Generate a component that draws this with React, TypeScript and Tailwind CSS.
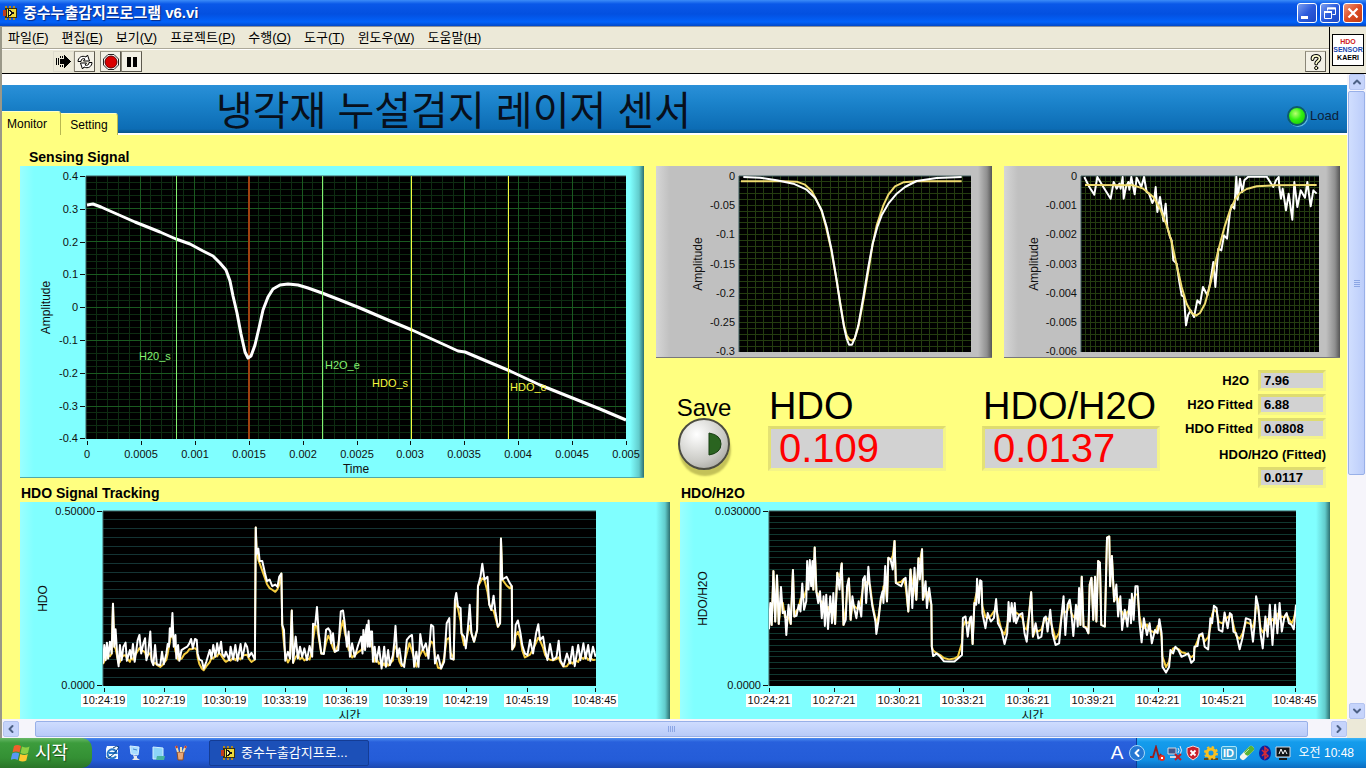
import React from 'react';
import { ChevronDown, ChevronLeft, ChevronRight, ChevronUp } from 'lucide-react';

type Pt = [number, number];

interface Tick {
  at: number;
  label: string;
}

interface PlotArea {
  x: number;
  y: number;
  w: number;
  h: number;
}

interface Trace {
  points: string;
  color: string;
  width: number;
}

interface ChartProps {
  name: string;
  width: number;
  height: number;
  plot: PlotArea;
  tone: 'cyan' | 'gray';
  yTicks: Tick[];
  xTicks?: Tick[];
  timeAxis?: boolean;
  yTitle: string;
  yTitleX: number;
  xTitle?: string;
  xTitleY?: number;
  viewBox: string;
  traces: Trace[];
  grid: React.ReactNode;
  yDash?: boolean;
  children?: React.ReactNode;
}

const parse = (s: string): Pt[] => s.trim().split(/\s+/).map((p) => p.split(',').map(Number) as Pt);

// fitted trace: moving average of the raw trace, slightly offset
const fitted = (s: string, offset: number) => {
  const pts = parse(s);
  return pts
    .map(([x, y], i) => {
      const prev = pts[Math.max(0, i - 1)][1];
      const next = pts[Math.min(pts.length - 1, i + 1)][1];
      const jump = Math.abs(y - prev) > 120 || Math.abs(y - next) > 120;
      return `${x},${jump ? y : y * 0.4 + prev * 0.3 + next * 0.3 + offset}`;
    })
    .join(' ');
};

const sensingTrace =
  '87,205 93,204 101,207 110,211 135,222 160,232 176,239 190,244 203,251 213,256 220,263 226,270 230,281 233,296 237,313 241,334 245,352 248,358 251,356 255,345 259,328 263,310 268,297 273,289 280,285 288,284 298,285 308,288 322,293 340,300 360,308 388,320 412,330 445,345 458,351 465,352 510,371 540,385 575,399 600,409 626,420';

const h2oRaw =
  '280,50 330,52 380,60 430,70 470,88 495,112 515,150 530,200 545,270 560,360 572,440 582,500 590,535 597,553 606,553 614,535 625,495 640,410 655,320 668,250 682,200 695,165 715,130 740,100 765,80 800,62 860,53 935,50';
const h2oFit =
  '273,63 400,63 440,64 465,73 485,92 500,120 515,152 528,200 543,265 558,350 572,435 582,495 590,525 598,537 606,541 614,535 625,500 642,410 657,320 668,252 680,195 700,135 715,103 735,78 760,66 800,63 935,63';

const hdoRaw =
  '253,50 268,80 283,103 292,50 310,80 332,115 341,65 350,85 358,70 362,85 368,50 371,115 378,80 385,65 388,88 394,50 404,102 410,52 424,80 432,50 440,95 447,100 457,128 463,115 467,80 472,155 480,110 486,150 490,182 497,130 502,200 510,230 515,240 520,300 530,310 538,365 545,405 552,410 558,495 564,465 572,450 582,470 592,420 600,430 609,380 622,405 630,370 640,305 646,380 655,265 664,270 672,225 681,235 690,155 695,135 703,145 709,49 713,118 720,55 727,95 733,60 745,49 800,49 820,80 828,60 836,50 838,80 843,115 848,85 852,110 858,150 866,100 877,178 883,65 892,140 902,90 915,112 922,65 932,138 940,90 950,100';
const hdoFit =
  '255,74 400,75 430,85 460,110 480,145 500,195 515,245 530,315 545,380 560,430 575,458 588,466 600,458 615,430 630,375 645,310 660,250 675,195 690,150 705,118 720,98 740,86 770,78 820,75 950,74';

const hdoTracking =
  '238,520 241,465 244,510 247,458 250,505 254,455 258,490 261,342 264,470 267,418 271,500 274,528 277,465 281,510 285,470 290,458 293,512 300,480 303,505 307,462 311,515 318,450 322,435 326,490 331,460 335,445 338,510 342,490 347,425 350,512 354,525 358,465 362,522 370,525 374,485 378,522 384,490 387,462 390,470 392,415 395,440 398,370 401,470 405,435 407,505 411,465 414,512 419,480 425,475 432,470 437,460 441,447 445,475 450,447 454,450 456,490 460,508 466,512 470,535 476,515 484,480 488,505 492,465 497,500 501,460 505,490 510,455 513,492 518,500 521,485 529,510 532,470 538,508 543,465 548,512 555,462 559,505 566,460 570,470 574,500 580,488 588,508 590,115 592,195 596,178 599,215 605,215 611,250 616,275 622,270 628,290 635,285 640,292 644,262 649,252 651,405 655,420 658,512 664,485 669,505 673,362 676,518 682,440 687,505 692,470 697,500 702,475 708,510 714,468 720,500 722,402 727,405 731,352 735,430 741,490 747,492 752,420 757,415 762,425 764,460 768,430 772,485 780,480 786,365 791,362 795,400 800,470 804,425 807,500 812,460 818,500 826,465 833,440 836,490 838,420 842,480 844,420 846,405 848,470 850,392 853,470 855,425 858,425 860,515 864,470 868,515 874,470 880,535 886,470 890,530 895,480 899,525 906,495 909,460 912,408 916,500 921,475 926,520 932,530 938,450 944,440 950,435 955,530 960,485 965,530 969,432 975,480 982,460 988,505 994,405 999,410 1003,520 1010,495 1017,535 1024,515 1030,400 1036,385 1039,505 1046,508 1049,330 1052,310 1056,350 1062,355 1064,430 1070,440 1074,475 1079,410 1083,345 1087,430 1093,455 1100,420 1102,290 1108,260 1112,223 1117,270 1124,262 1128,345 1133,360 1138,318 1142,365 1148,410 1153,400 1155,148 1158,270 1168,262 1175,280 1180,290 1181,478 1186,465 1189,405 1194,392 1200,430 1204,465 1210,490 1216,495 1222,450 1229,490 1236,430 1241,403 1245,450 1252,440 1257,480 1262,510 1268,462 1275,510 1283,500 1288,452 1292,510 1299,528 1307,490 1314,520 1320,470 1325,528 1333,465 1338,510 1345,460 1350,505 1356,465 1361,512 1367,470 1373,500';

const ratioTracking =
  '222,418 225,340 228,405 232,245 236,395 240,258 244,402 249,292 253,370 258,365 261,435 266,345 271,402 276,242 279,380 284,378 289,345 293,365 297,282 301,360 306,335 308,215 311,300 314,212 317,290 320,215 322,300 325,175 329,308 333,340 337,305 341,385 345,320 348,408 351,315 355,417 360,320 364,400 367,310 371,402 376,250 381,300 384,240 386,222 390,405 395,390 398,290 402,267 406,390 410,320 414,355 419,385 424,335 430,380 434,270 438,260 441,340 446,232 450,300 455,350 462,395 464,432 469,390 474,325 478,305 480,340 484,230 488,335 491,205 496,210 501,240 505,155 508,280 514,285 520,290 526,270 530,265 536,365 541,240 545,355 550,235 554,330 559,207 562,270 567,180 569,330 575,275 578,355 583,295 588,345 589,470 592,498 600,490 608,500 616,513 628,514 640,514 648,505 657,495 659,385 665,380 670,440 675,385 678,380 681,462 685,340 689,345 691,268 695,340 698,272 701,275 703,370 710,415 715,370 722,395 729,385 734,328 738,400 746,420 753,462 759,430 762,337 765,395 769,340 774,395 776,340 779,400 786,375 793,370 798,430 803,455 808,380 813,308 817,440 823,400 829,445 836,440 842,385 846,380 850,425 856,360 861,430 868,465 876,460 882,370 886,320 890,435 895,345 900,330 903,360 908,438 914,345 918,410 921,295 924,405 927,262 931,410 937,415 942,430 945,285 949,265 953,390 957,262 960,395 964,215 968,220 971,405 979,410 984,145 989,142 991,290 995,200 1000,335 1005,285 1009,380 1014,320 1018,420 1024,360 1030,410 1035,330 1038,400 1040,312 1044,390 1048,290 1053,290 1057,395 1062,457 1067,385 1074,435 1080,400 1085,460 1092,420 1098,430 1102,388 1107,430 1109,530 1117,547 1124,530 1127,480 1133,490 1138,470 1145,480 1152,500 1160,495 1167,490 1174,518 1180,510 1181,470 1188,468 1192,435 1199,430 1204,470 1212,478 1217,385 1221,400 1225,348 1231,355 1236,420 1244,425 1249,368 1256,415 1261,370 1265,375 1269,425 1275,430 1283,478 1290,440 1297,385 1307,390 1313,455 1317,400 1320,320 1325,350 1330,430 1335,475 1341,380 1346,440 1351,345 1357,465 1363,345 1368,430 1373,340 1378,425 1384,380 1389,370 1394,400 1400,405 1405,418 1410,345';

const ticks = (labels: string[], start: number, step: number): Tick[] =>
  labels.map((label, i) => ({ label, at: Math.round(start + i * step) }));

const GridLines: React.FC<{ plot: PlotArea; nx: number; ny: number; color: string }> = ({ plot, nx, ny, color }) => (
  <g stroke={color} shapeRendering="crispEdges">
    {Array.from({ length: Math.max(0, nx - 1) }, (_, i) => {
      const x = plot.x + ((i + 1) * plot.w) / nx;
      return <line key={`x${i}`} x1={x} x2={x} y1={plot.y} y2={plot.y + plot.h} />;
    })}
    {Array.from({ length: Math.max(0, ny - 1) }, (_, i) => {
      const y = plot.y + ((i + 1) * plot.h) / ny;
      return <line key={`y${i}`} y1={y} y2={y} x1={plot.x} x2={plot.x + plot.w} />;
    })}
  </g>
);

const Chart: React.FC<ChartProps> = ({
  name,
  width,
  height,
  plot,
  tone,
  yTicks,
  xTicks = [],
  timeAxis,
  yTitle,
  yTitleX,
  xTitle,
  xTitleY = 0,
  viewBox,
  traces,
  grid,
  yDash = true,
  children,
}) => {
  const bottom = plot.y + plot.h;
  const midY = plot.y + plot.h / 2;
  return (
    <div
      className={
        tone === 'cyan'
          ? 'border-b border-[#4fa8a8] bg-[linear-gradient(to_right,#9affff_0,#80ffff_14px,#80ffff_calc(100%-14px),#62cccc_calc(100%-5px),#2d7070_100%)]'
          : 'border-b border-[#77777a] bg-[linear-gradient(to_right,#d6d6d6_0,#c0c0c0_14px,#c0c0c0_calc(100%-14px),#8f8f8f_calc(100%-5px),#555_100%)]'
      }
    >
      <svg role="img" aria-label={name} viewBox={`0 0 ${width} ${height}`} className="block w-full">
        <rect x={plot.x} y={plot.y} width={plot.w} height={plot.h} fill="#000" />
        {grid}
        <path d={`M${plot.x} ${bottom}V${plot.y}H${plot.x + plot.w}`} fill="none" stroke="#3d5c5c" />
        <svg x={plot.x} y={plot.y} width={plot.w} height={plot.h} viewBox={viewBox} preserveAspectRatio="none">
          {traces.map((t, i) => (
            <polyline
              key={i}
              points={t.points}
              fill="none"
              stroke={t.color}
              strokeWidth={t.width}
              strokeLinejoin="round"
              vectorEffect="non-scaling-stroke"
            />
          ))}
        </svg>
        <g fontSize="11" fill="#101010">
          {yTicks.map((t) => (
            <g key={t.label}>
              {yDash && <path d={`M${plot.x - 6} ${t.at + 0.5}h5`} stroke="#101010" />}
              <text x={plot.x - (yDash ? 8 : 4)} y={t.at + 4} textAnchor="end">
                {t.label}
              </text>
            </g>
          ))}
          {xTicks.map((t) => (
            <g key={t.label}>
              <path d={`M${t.at + 0.5} ${bottom + 2}v4`} stroke="#101010" />
              {timeAxis && <rect x={t.at - 23} y={bottom + 8} width="46" height="13" fill="#fff" />}
              <text x={t.at} y={bottom + (timeAxis ? 18 : 19)} textAnchor="middle">
                {t.label}
              </text>
            </g>
          ))}
        </g>
        <g fontSize="12" fill="#101010" textAnchor="middle">
          <text transform={`translate(${yTitleX} ${midY}) rotate(-90)`}>{yTitle}</text>
          {xTitle && (
            <text x={plot.x + plot.w / 2} y={xTitleY}>
              {xTitle}
            </text>
          )}
        </g>
        {children}
      </svg>
    </div>
  );
};

const LabviewIcon = () => (
  <svg viewBox="0 0 16 16" className="size-4 shrink-0" shapeRendering="crispEdges" aria-hidden="true">
    <path d="M2 1h2v2h2V1h2v2h2V1h2v2h2v10h-2v2h-2v-2H8v2H6v-2H4v2H2z" fill="#b08820" />
    <rect x="2" y="3" width="12" height="10" fill="#3a3010" />
    <rect x="4" y="4" width="9" height="8" fill="#ecd83c" />
    <rect x="0" y="5" width="3" height="6" fill="#c23c1c" />
    <path d="M5 4v8l7-4z" fill="#141414" />
    <path d="M6 6v4l3-2z" fill="#fff8a0" />
  </svg>
);

const ToolButton: React.FC<{ label: string; flat?: boolean; children: React.ReactNode }> = ({ label, flat, children }) => (
  <button
    aria-label={label}
    className={
      flat
        ? 'flex size-[21px] items-center justify-center border border-[#dedbcd]'
        : 'flex size-[21px] items-center justify-center border border-t-[#a19d8d] border-r-[#5c594e] border-b-[#5c594e] border-l-[#8a8677] bg-[#f3f1e6]'
    }
  >
    {children}
  </button>
);

const menus: [string, string][] = [
  ['파일', 'F'],
  ['편집', 'E'],
  ['보기', 'V'],
  ['프로젝트', 'P'],
  ['수행', 'O'],
  ['도구', 'T'],
  ['윈도우', 'W'],
  ['도움말', 'H'],
];

const TitleBar = () => (
  <header className="flex h-[26px] shrink-0 items-center bg-[linear-gradient(#3c8cf8_0,#0a58e8_4px,#0350e0_14px,#0262fa_22px,#0148c8_100%)] pr-[3px] pl-[3px]">
    <LabviewIcon />
    <h1 className="flex-1 pl-1 text-[15px] leading-5 font-bold text-white [text-shadow:1px_1px_1px_#0a2a80]">중수누출감지프로그램 v6.vi</h1>
    <div className="flex gap-[3px]">
      <button aria-label="Minimize" className="flex size-5 items-center justify-center rounded-[3px] border border-white bg-[linear-gradient(135deg,#7c9ff0,#2c5bdc_50%,#1e48c4)]">
        <svg viewBox="0 0 18 18" className="size-[18px]"><path d="M3 12h7v3H3z" fill="#fff" /></svg>
      </button>
      <button aria-label="Restore" className="flex size-5 items-center justify-center rounded-[3px] border border-white bg-[linear-gradient(135deg,#7c9ff0,#2c5bdc_50%,#1e48c4)]">
        <svg viewBox="0 0 18 18" className="size-[18px]" fill="none" stroke="#fff">
          <path d="M6.500 6.500V4h8v6.500h-3" />
          <path d="M6 4.500h9" strokeWidth="2" />
          <path d="M3.500 8h7v6.500h-7z" />
          <path d="M3 8h8" strokeWidth="2" />
        </svg>
      </button>
      <button aria-label="Close" className="flex size-5 items-center justify-center rounded-[3px] border border-white bg-[linear-gradient(135deg,#f0987c,#dc4c24_50%,#c03c14)]">
        <svg viewBox="0 0 18 18" className="size-[18px]"><path d="M4.500 4.500l9 9M13.500 4.500l-9 9" stroke="#fff" strokeWidth="2.200" /></svg>
      </button>
    </div>
  </header>
);

const Toolbar = () => (
  <div className="flex h-12 shrink-0 border-t border-b border-t-[#8a8f98] border-b-black bg-[#ece9d8]">
    <div className="flex flex-1 flex-col">
      <nav className="flex h-[22px] items-center gap-[13px] border-b border-[#aca899] pl-[6px] text-[13px] leading-4 text-black">
        {menus.map(([text, key]) => (
          <button key={key}>
            {text}(<span className="underline">{key}</span>)
          </button>
        ))}
      </nav>
      <div className="flex flex-1 items-center border-t border-white pr-[3px] pl-[51px]">
        <ToolButton label="Run" flat>
          <svg viewBox="0 0 17 15" className="h-[15px] w-[17px]" shapeRendering="crispEdges">
            <path d="M1 4h1v7H1zM3 4h1v7H3zM5 5h5v5H5z" fill="#000" />
            <path d="M9 1l7 6.500L9 14z" fill="#000" />
            <path d="M5 2h1v2H5zM7 2h1v2H7zM5 11h1v2H5zM7 11h1v2H7z" fill="#000" />
          </svg>
        </ToolButton>
        <ToolButton label="Run Continuously">
          <svg viewBox="0 0 18 18" className="size-[18px]" fill="#fff" stroke="#000" strokeWidth="1">
            <path d="M2 8.500c0-4 4-6.500 8-4.500l1.500-2 2 6H7.500l1.500-2C7 5 5 6 5 8.500z" />
            <path d="M16 9.500c0 4-4 6.500-8 4.500l-1.500 2-2-6h6L9 12c2 1 4 0 4-2.500z" />
          </svg>
        </ToolButton>
        <span className="w-[5px]" />
        <ToolButton label="Abort Execution">
          <svg viewBox="0 0 18 18" className="size-[18px]">
            <path d="M6 1.500h6l4.500 4.500v6L12 16.500H6L1.500 12V6z" fill="#fff" stroke="#222" />
            <circle cx="9" cy="9" r="6" fill="#d90000" stroke="#5a0000" />
          </svg>
        </ToolButton>
        <ToolButton label="Pause">
          <svg viewBox="0 0 18 18" className="size-[18px]"><path d="M4 4h4v10H4zM10 4h4v10h-4z" fill="#000" /></svg>
        </ToolButton>
        <span className="flex-1" />
        <ToolButton label="Help">
          <svg viewBox="0 0 18 18" className="size-[18px]" fill="none" strokeLinecap="round">
            <path d="M5.500 6C5.500 2 12.500 2 12.500 5.500C12.500 8 9.200 8.500 9.200 10.500" stroke="#000" strokeWidth="3.800" />
            <path d="M5.500 6C5.500 2 12.500 2 12.500 5.500C12.500 8 9.200 8.500 9.200 10.500" stroke="#ffffd0" strokeWidth="1.800" />
            <circle cx="9.200" cy="15" r="1.600" fill="#ffffd0" stroke="#000" />
          </svg>
        </ToolButton>
      </div>
    </div>
    <div className="flex w-[37px] items-center justify-center border-l border-black">
      <div className="flex size-8 shrink-0 flex-col items-center justify-center border border-black bg-white text-[7px] leading-[8px] font-bold">
        <span className="text-[#d02020]">HDO</span>
        <span className="text-[#1848b0]">SENSOR</span>
        <span className="text-black">KAERI</span>
      </div>
    </div>
  </div>
);

const TabHeader = () => (
  <div className="flex h-[50px] items-stretch bg-[linear-gradient(#2a90d8_0,#1c84cc_16px,#0c6cb4_44px,#0a5488_48px,#fff_48px,#fff_50px)]">
    <div role="tablist" className="flex w-[214px] items-end text-xs leading-4 text-black">
      <button role="tab" aria-selected="true" className="h-6 w-[59px] rounded-tr-[3px] border-t border-r border-t-[#ffffc8] border-r-[#b8b850] bg-[#ffff80] pr-2 text-center">
        Monitor
      </button>
      <button role="tab" aria-selected="false" className="h-[22px] w-[57px] rounded-tr-[3px] border-t border-r border-t-[#ffffc8] border-r-[#b8b850] bg-[#ffff80] text-center">
        Setting
      </button>
    </div>
    <h2 className="flex-1 pt-[2px] text-[40px] leading-[48px] text-[#08101c]">냉각재 누설검지 레이저 센서</h2>
    <div className="flex items-center gap-[3px] pt-3 pr-2 text-[13px] text-[#0c2038]">
      <span className="size-5 rounded-full border-2 border-[#0d5c6c] bg-[radial-gradient(circle_at_40%_35%,#b8ff70,#30f010_45%,#18b808)] shadow-[1px_1px_0_#5cb8e0]" />
      Load
    </div>
  </div>
);

const PanelLabel: React.FC<{ children: React.ReactNode; indent?: boolean }> = ({ children, indent }) => (
  <h3 className={indent ? 'h-4 pl-[9px] text-sm leading-[14px] font-bold' : 'h-4 pl-px text-sm leading-[14px] font-bold'}>{children}</h3>
);

const bigValues = [
  { id: 'hdo', label: 'HDO', value: '0.109' },
  { id: 'ratio', label: 'HDO/H2O', value: '0.0137' },
];

const smallValues = [
  { id: 'h2o', label: 'H2O', value: '7.96' },
  { id: 'h2o-fit', label: 'H2O Fitted', value: '6.88' },
  { id: 'hdo-fit', label: 'HDO Fitted', value: '0.0808' },
];

const smallBox =
  'h-[21px] w-[68px] border-[3px] border-t-[#dedc70] border-r-[#f4f488] border-b-[#f4f488] border-l-[#e4e274] bg-[#d2d2d2] pl-[3px] text-[13px] font-bold text-black outline-none';

const Readouts = () => (
  <div className="flex h-32 gap-9 pl-5">
    <div className="flex w-14 flex-col items-center pt-10">
      <label htmlFor="save" className="text-2xl leading-5 text-black">Save</label>
      <button id="save" className="size-[52px] shrink-0 rounded-full border-2 border-[#4c4c40] bg-[radial-gradient(circle_at_35%_30%,#fff,#c9c9c4_60%,#8f8f88)] shadow-[1px_6px_2px_#c4c258]">
        <svg viewBox="0 0 48 48" className="size-12" aria-hidden="true">
          <path d="M29 13q12 2 12 11t-12 11z" fill="#2a6420" stroke="#163c10" />
        </svg>
      </button>
    </div>
    {bigValues.map((v) => (
      <div key={v.id} className="flex w-[178px] flex-col pt-7">
        <label htmlFor={v.id} className="h-10 pl-px text-[38px] leading-10 text-black">{v.label}</label>
        <input
          id={v.id}
          readOnly
          value={v.value}
          className="h-[45px] w-full border-[3px] border-t-[#dedc70] border-r-[#f4f488] border-b-[#f4f488] border-l-[#e4e274] bg-[#d2d2d2] pl-2 text-[40px] leading-[39px] text-[#ff0000] outline-none"
        />
      </div>
    ))}
    <div className="-ml-9 flex flex-1 flex-col items-end gap-[3px] pt-3 pr-[14px] text-[13px] font-bold text-black">
      {smallValues.map((v) => (
        <div key={v.id} className="flex items-center gap-[5px]">
          <label htmlFor={v.id} className={v.id === 'h2o' ? 'pr-1' : ''}>{v.label}</label>
          <input id={v.id} readOnly value={v.value} className={smallBox} />
        </div>
      ))}
      <label htmlFor="ratio-fit" className="pt-1 leading-[18px]">HDO/H2O (Fitted)</label>
      <input id="ratio-fit" readOnly value="0.0117" className={smallBox} />
    </div>
  </div>
);

const p1: PlotArea = { x: 66, y: 10, w: 540, h: 263 };
const p2: PlotArea = { x: 83, y: 10, w: 232, h: 176 };
const p3: PlotArea = { x: 77, y: 10, w: 238, h: 176 };
const p4: PlotArea = { x: 83, y: 9, w: 493, h: 175 };
const p5: PlotArea = { x: 89, y: 9, w: 527, h: 175 };

const cursors = [
  { x: 156, color: '#84f070', label: 'H20_s', tx: 119, ty: 194 },
  { x: 302, color: '#84f070', label: 'H2O_e', tx: 305, ty: 203 },
  { x: 391, color: '#f8f840', label: 'HDO_s', tx: 352, ty: 221 },
  { x: 488, color: '#f8f840', label: 'HDO_e', tx: 490, ty: 225 },
];

const MonitorPage = () => (
  <div className="pt-[15px] pl-[18px] text-black">
    <div className="grid grid-cols-[624fr_684fr] gap-x-3 pr-[7px]">
      <section>
        <PanelLabel indent>Sensing Signal</PanelLabel>
        <Chart
          name="Sensing Signal"
          width={624}
          height={311}
          plot={p1}
          tone="cyan"
          yTicks={ticks(['0.4', '0.3', '0.2', '0.1', '0', '-0.1', '-0.2', '-0.3', '-0.4'], 10, 32.8)}
          xTicks={ticks(['0', '0.0005', '0.001', '0.0015', '0.002', '0.0025', '0.003', '0.0035', '0.004', '0.0045', '0.005'], 67, 53.9)}
          yTitle="Amplitude"
          yTitleX={30}
          xTitle="Time"
          xTitleY={307}
          viewBox="86 176 540 263"
          traces={[{ points: sensingTrace, color: '#fff', width: 3 }]}
          grid={
            <>
              <GridLines plot={p1} nx={50} ny={40} color="#0e2c12" />
              <GridLines plot={p1} nx={10} ny={8} color="#1a5a20" />
              <path d="M229 10v263" stroke="#a04010" strokeWidth="2" />
            </>
          }
        >
          {cursors.map((c) => (
            <g key={c.label}>
              <path d={`M${c.x + 0.5} 10v263`} stroke={c.color} shapeRendering="crispEdges" />
              <text x={c.tx} y={c.ty} fontSize="11" fill={c.color}>
                {c.label}
              </text>
            </g>
          ))}
        </Chart>
      </section>
      <section>
        <div className="grid grid-cols-2 gap-3 pt-4">
          <Chart
            name="H2O absorption"
            width={336}
            height={191}
            plot={p2}
            tone="gray"
            yDash={false}
            yTicks={ticks(['0', '-0.05', '-0.1', '-0.15', '-0.2', '-0.25', '-0.3'], 10, 29.2)}
            yTitle="Amplitude"
            yTitleX={46}
            viewBox="267 47 696 528"
            traces={[
              { points: h2oFit, color: '#f0dc70', width: 2 },
              { points: h2oRaw, color: '#fff', width: 2 },
            ]}
            grid={<GridLines plot={p2} nx={28} ny={30} color="#243c10" />}
          />
          <Chart
            name="HDO absorption"
            width={336}
            height={191}
            plot={p3}
            tone="gray"
            yDash={false}
            yTicks={ticks(['0', '-0.001', '-0.002', '-0.003', '-0.004', '-0.005', '-0.006'], 10, 29.2)}
            yTitle="Amplitude"
            yTitleX={34}
            viewBox="243 47 714 528"
            traces={[
              { points: hdoRaw, color: '#fff', width: 2 },
              { points: hdoFit, color: '#f0dc70', width: 2 },
            ]}
            grid={<GridLines plot={p3} nx={48} ny={30} color="#243c10" />}
          />
        </div>
        <Readouts />
      </section>
    </div>
    <div className="grid grid-cols-2 gap-x-[10px] pr-[17px]">
      <section>
        <PanelLabel>HDO Signal Tracking</PanelLabel>
        <Chart
          name="HDO Signal Tracking"
          width={650}
          height={240}
          plot={p4}
          tone="cyan"
          yTicks={[{ at: 9, label: '0.50000' }, { at: 183, label: '0.0000' }]}
          xTicks={[...ticks(['10:24:19', '10:27:19', '10:30:19', '10:33:19', '10:36:19', '10:39:19', '10:42:19', '10:45:19'], 84, 60.4), { at: 575, label: '10:48:45' }]}
          timeAxis
          yTitle="HDO"
          yTitleX={27}
          xTitle="시간"
          xTitleY={218}
          viewBox="238 66 1136 521"
          traces={[
            { points: fitted(hdoTracking, 18), color: '#f4cc40', width: 2 },
            { points: hdoTracking, color: '#fff', width: 2 },
          ]}
          grid={<GridLines plot={p4} nx={0} ny={20} color="#143434" />}
        />
      </section>
      <section>
        <PanelLabel>HDO/H2O</PanelLabel>
        <Chart
          name="HDO/H2O"
          width={650}
          height={240}
          plot={p5}
          tone="cyan"
          yTicks={[{ at: 9, label: '0.030000' }, { at: 183, label: '0.0000' }]}
          xTicks={[...ticks(['10:24:21', '10:27:21', '10:30:21', '10:33:21', '10:36:21', '10:39:21', '10:42:21', '10:45:21'], 89, 64.8), { at: 615, label: '10:48:45' }]}
          timeAxis
          yTitle="HDO/H2O"
          yTitleX={27}
          xTitle="시간"
          xTitleY={218}
          viewBox="222 66 1188 521"
          traces={[
            { points: fitted(ratioTracking, -6), color: '#f4cc40', width: 2 },
            { points: ratioTracking, color: '#fff', width: 2 },
          ]}
          grid={<GridLines plot={p5} nx={0} ny={30} color="#103830" />}
        />
      </section>
    </div>
  </div>
);

const scrollBtn =
  'flex size-4 shrink-0 items-center justify-center rounded-[2px] border border-[#b4c4f0] bg-[#c6d4fb] text-[#4d6185]';

const VScroll = () => (
  <div className="flex w-[19px] shrink-0 flex-col items-center bg-[#f6f5fb]">
    <button aria-label="Scroll up" className={scrollBtn}><ChevronUp className="size-3" strokeWidth={4} /></button>
    <div className="flex w-full flex-1 flex-col px-px pt-px">
      <div className="flex h-[384px] flex-col items-center justify-center gap-px rounded-[2px] border border-[#98b0e8] bg-[linear-gradient(to_right,#d0defe,#bccdfa)]">
        <i className="h-px w-[6px] bg-[#8ca6e4]" />
        <i className="h-px w-[6px] bg-[#8ca6e4]" />
        <i className="h-px w-[6px] bg-[#8ca6e4]" />
        <i className="h-px w-[6px] bg-[#8ca6e4]" />
      </div>
    </div>
    <button aria-label="Scroll down" className={scrollBtn}><ChevronDown className="size-3" strokeWidth={4} /></button>
  </div>
);

const HScroll = () => (
  <div className="flex h-[19px] shrink-0 items-center bg-[#f6f5fb] pl-px">
    <button aria-label="Scroll left" className={scrollBtn}><ChevronLeft className="size-3" strokeWidth={4} /></button>
    <div className="flex flex-1 pr-[23px] pl-4">
      <div className="flex h-4 flex-1 items-center justify-center gap-px rounded-[2px] border border-[#98b0e8] bg-[linear-gradient(#cedcfe,#b8caf8)]">
        <i className="h-[6px] w-px bg-[#8ca6e4]" />
        <i className="h-[6px] w-px bg-[#8ca6e4]" />
        <i className="h-[6px] w-px bg-[#8ca6e4]" />
        <i className="h-[6px] w-px bg-[#8ca6e4]" />
      </div>
    </div>
    <button aria-label="Scroll right" className={scrollBtn}><ChevronRight className="size-3" strokeWidth={4} /></button>
    <div className="h-full w-[19px] bg-[#ece9d8]" />
  </div>
);

const WindowsLogo = () => (
  <svg viewBox="0 0 20 20" className="size-5" aria-hidden="true">
    <path d="M3 3q3-2 7 0L8.500 9.500q-3.500-2-7 0z" fill="#f0602c" />
    <path d="M11 3.500q4 2 7.500 0L17 10q-3.500 2-7.500 0z" fill="#8cd044" />
    <path d="M1.200 10.500q3.500-2 7 0L6.700 17q-3.500-2-7 0z" fill="#5898f4" />
    <path d="M9.300 11q4 2 7.500 0l-1.500 6.500q-3.500 2-7.500 0z" fill="#fcc830" />
  </svg>
);

const QuickLaunch = () => (
  <div className="flex items-center gap-[7px]">
    <svg viewBox="0 0 16 16" className="size-4">
      <path d="M3 1h11v13H2V4z" fill="#f4faff" />
      <path d="M12 11A4.500 4.500 0 1 1 12.500 8H5" fill="none" stroke="#2878c8" strokeWidth="2" />
      <path d="M2 12Q1 15 6 12T15 2Q13 0 9 3" fill="none" stroke="#0c4484" />
    </svg>
    <svg viewBox="0 0 16 16" className="size-4">
      <path d="M3 1l9 1-1 8-7-1z" fill="#a8dcff" stroke="#d8f0ff" />
      <path d="M6 10l4 1v2l3 2H5l2-2z" fill="#e8e8e8" />
      <path d="M6 4l4 1" stroke="#4884d0" />
    </svg>
    <svg viewBox="0 0 16 16" className="size-4">
      <path d="M3 2l10 1v11H3z" fill="#8cd4f8" stroke="#d0f0ff" />
      <path d="M6 15l1-4h8l-1 4z" fill="#48b4a0" />
    </svg>
    <svg viewBox="0 0 16 16" className="size-4">
      <path d="M4 7h7l-1 8H5z" fill="#e8a878" stroke="#8c4c28" />
      <path d="M5 7L3 1M8 7V2M10 7l3-6" stroke="#f0dca8" strokeWidth="2" />
      <path d="M3 1l1 2M13 1l-1 2" stroke="#c83c24" strokeWidth="2" />
    </svg>
  </div>
);

const TrayIcons = () => (
  <div className="flex items-center gap-[2px]">
    <svg viewBox="0 0 16 16" className="size-4">
      <path d="M1 12h3l3-10 3 11 2-4" fill="none" stroke="#981c1c" strokeWidth="1.800" />
      <circle cx="13" cy="13" r="3" fill="#e82c1c" />
      <path d="M12 12l2 2M14 12l-2 2" stroke="#fff" />
    </svg>
    <svg viewBox="0 0 16 16" className="size-4">
      <path d="M1 3h8v6H1z" fill="#40588c" stroke="#d4d8e0" />
      <path d="M3 12h6" stroke="#d4d8e0" strokeWidth="2" />
      <path d="M11 3q2 2 0 5M13 1q3 4 0 9" fill="none" stroke="#e0e8f8" />
      <path d="M8 9l6 6M14 9l-6 6" stroke="#c01c24" strokeWidth="2" />
    </svg>
    <svg viewBox="0 0 16 16" className="size-4">
      <path d="M8 1l6 2v5q0 4-6 7-6-3-6-7V3z" fill="#c8202c" stroke="#f0d8d8" />
      <path d="M5.500 5.500l5 5M10.500 5.500l-5 5" stroke="#fff" strokeWidth="1.800" />
    </svg>
    <svg viewBox="0 0 16 16" className="size-4">
      <path d="M1 14h14" stroke="#584c28" strokeWidth="2" />
      <circle cx="8" cy="8" r="4" fill="none" stroke="#f8c020" strokeWidth="3" />
      <circle cx="8" cy="8" r="6" fill="none" stroke="#f8c020" strokeWidth="2" strokeDasharray="2.360 2.350" />
    </svg>
    <span className="flex h-[14px] w-4 items-center justify-center rounded-[2px] border border-[#a8e4f8] bg-[#38a4d8] text-[11px] leading-3 font-bold text-white">ID</span>
    <svg viewBox="0 0 16 16" className="size-4">
      <path d="M4 12l8-8" stroke="#f4f4ec" strokeWidth="6" strokeLinecap="round" />
      <path d="M8.500 7.500L12 4" stroke="#58b434" strokeWidth="6" strokeLinecap="round" />
      <path d="M4 10l6-6" stroke="#fff" opacity=".6" />
    </svg>
    <svg viewBox="0 0 16 16" className="size-4">
      <ellipse cx="8" cy="8" rx="6" ry="7.500" fill="#10209c" />
      <path d="M5 5l6 6-3 2.500v-11L11 5l-6 6" fill="none" stroke="#d82c34" strokeWidth="1.500" />
    </svg>
    <svg viewBox="0 0 16 16" className="size-4">
      <path d="M1 2h14v10H1z" fill="#101418" stroke="#d8dce4" />
      <path d="M4 9l2-5 2 5 2-4 2 4" fill="none" stroke="#fff" />
      <path d="M4 14h8" stroke="#181818" strokeWidth="2" />
    </svg>
  </div>
);

const Taskbar = () => (
  <footer className="flex h-[30px] shrink-0 items-stretch bg-[linear-gradient(#4c8cf0_0,#2860dc_4px,#245cd8_22px,#1c48b0_100%)] text-white">
    <button className="flex w-[92px] items-center gap-1 rounded-r-[10px] bg-[linear-gradient(#68b868_0,#3c9c3c_5px,#349034_20px,#2a7428_100%)] pl-[11px] text-lg [text-shadow:1px_1px_1px_#184818]">
      <WindowsLogo />
      시작
    </button>
    <div className="flex w-[117px] items-center pl-3"><QuickLaunch /></div>
    <button className="my-[2px] flex w-[160px] items-center gap-1 rounded-[2px] border border-[#143c94] bg-[#1c50b8] pl-[11px] text-[13px]">
      <LabviewIcon />
      중수누출감지프로...
    </button>
    <div className="flex-1" />
    <span className="pr-3 text-[19px] leading-[30px]">A</span>
    <div className="flex items-center border-l border-[#0c3c98] bg-[linear-gradient(#3cb4f8_0,#149cec_4px,#1090e4_22px,#0c6cc0_100%)] pr-3 text-xs">
      <button aria-label="Show hidden icons" className="-ml-2 mr-1 flex size-4 items-center justify-center rounded-full border border-[#a8d8f8] bg-[#2478d4]">
        <ChevronLeft className="size-3" strokeWidth={4} />
      </button>
      <TrayIcons />
      <span className="pl-2">오전 10:48</span>
    </div>
  </footer>
);

const App: React.FC = () => (
  <div className="flex h-screen flex-col overflow-hidden bg-[#ece9d8] font-['Liberation_Sans','Noto_Sans_CJK_KR',sans-serif]">
    <TitleBar />
    <div className="flex min-h-0 flex-1 flex-col border-l-2 border-[#9a9888]">
      <Toolbar />
      <div className="flex min-h-0 flex-1">
        <main className="min-w-0 flex-1 overflow-hidden bg-[#ffff80]">
          <div className="h-[11px] bg-white" />
          <TabHeader />
          <MonitorPage />
        </main>
        <VScroll />
      </div>
      <HScroll />
    </div>
    <Taskbar />
  </div>
);

export default App;
